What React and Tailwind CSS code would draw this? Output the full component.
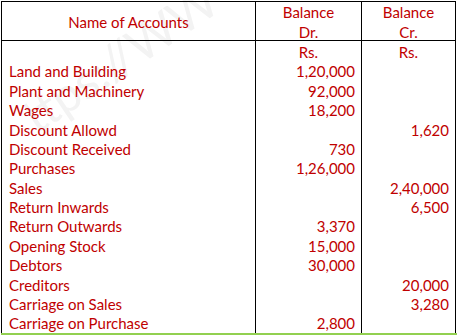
const rows = [
  { name: 'Land and Building', dr: '1,20,000', cr: '' },
  { name: 'Plant and Machinery', dr: '92,000', cr: '' },
  { name: 'Wages', dr: '18,200', cr: '' },
  { name: 'Discount Allowd', dr: '', cr: '1,620' },
  { name: 'Discount Received', dr: '730', cr: '' },
  { name: 'Purchases', dr: '1,26,000', cr: '' },
  { name: 'Sales', dr: '', cr: '2,40,000' },
  { name: 'Return Inwards', dr: '', cr: '6,500' },
  { name: 'Return Outwards', dr: '3,370', cr: '' },
  { name: 'Opening Stock', dr: '15,000', cr: '' },
  { name: 'Debtors', dr: '30,000', cr: '' },
  { name: 'Creditors', dr: '', cr: '20,000' },
  { name: 'Carriage on Sales', dr: '', cr: '3,280' },
  { name: 'Carriage on Purchase', dr: '2,800', cr: '' },
];

export default function App() {
  return (
    <div
      className="relative w-[458px] h-[336px] bg-white overflow-hidden text-[#c00000] text-[15px]"
      style={{ fontFamily: 'Lato, "Open Sans", sans-serif' }}
    >
      {/* faint watermark, behind the table */}
      <div className="absolute left-[40px] top-[92px] -rotate-[34deg] origin-bottom-left text-[48px] leading-none text-[#f3f3f3] whitespace-nowrap pointer-events-none">
        ttps://WW
      </div>

      <div className="relative ml-px mt-px w-[455px] border-l border-t border-black">
        {/* header */}
        <div className="grid grid-cols-[254px_106px_94px] border-b border-black h-[39px]">
          <div className="border-r border-black flex items-center justify-center">
            Name of Accounts
          </div>
          <div className="border-r border-black flex flex-col items-center justify-center leading-[20px]">
            <span>Balance</span>
            <span>Dr.</span>
          </div>
          <div className="border-r border-black flex flex-col items-center justify-center leading-[20px]">
            <span>Balance</span>
            <span>Cr.</span>
          </div>
        </div>

        {/* body */}
        <div className="grid grid-cols-[254px_106px_94px] h-[292px]">
          <div className="border-r border-black pt-[1.5px] pl-[7px]">
            <div className="h-[19.4px]" />
            {rows.map((r) => (
              <div key={r.name} className="h-[19.4px] flex items-center whitespace-nowrap">
                {r.name}
              </div>
            ))}
          </div>
          <div className="border-r border-black pt-[1.5px] pr-[6px]">
            <div className="h-[19.4px] flex items-center justify-center pl-[6px]">Rs.</div>
            {rows.map((r) => (
              <div key={r.name} className="h-[19.4px] flex items-center justify-end">
                {r.dr}
              </div>
            ))}
          </div>
          <div className="border-r border-black pt-[1.5px] pr-[6px]">
            <div className="h-[19.4px] flex items-center justify-center pl-[6px]">Rs.</div>
            {rows.map((r) => (
              <div key={r.name} className="h-[19.4px] flex items-center justify-end">
                {r.cr}
              </div>
            ))}
          </div>
        </div>
      </div>
      <div className="ml-px w-[456px] h-[2px] bg-[#92d050]" />
    </div>
  );
}
